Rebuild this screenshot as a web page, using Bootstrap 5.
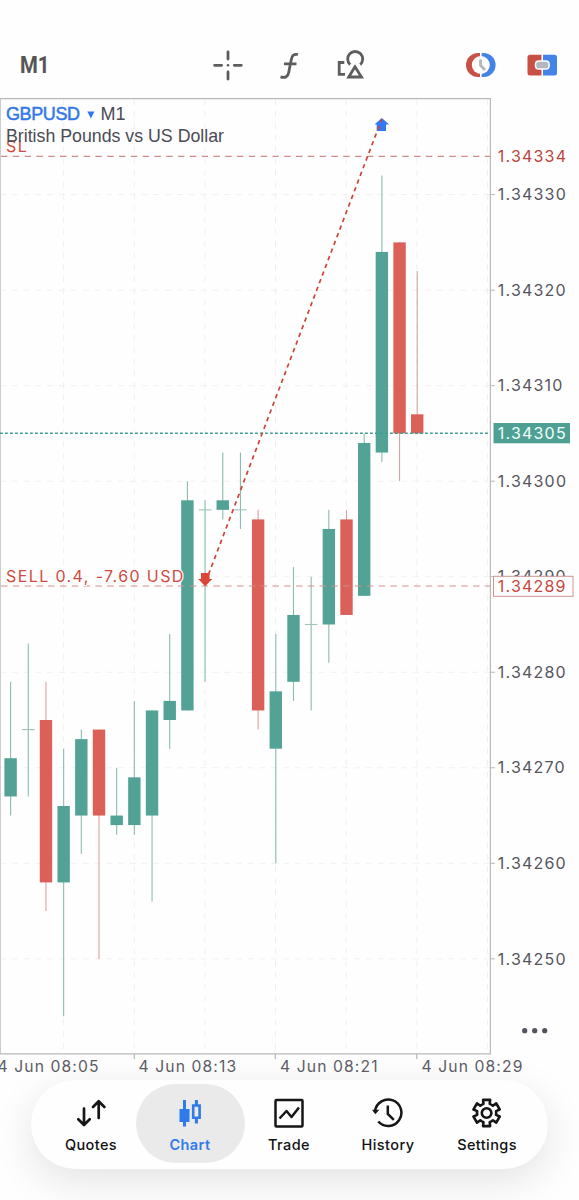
<!DOCTYPE html>
<html lang="en">
<head>
<meta charset="utf-8">
<meta name="viewport" content="width=device-width, initial-scale=1">
<title>GBPUSD M1</title>
<link rel="stylesheet" href="https://cdn.jsdelivr.net/npm/bootstrap@5.3.0/dist/css/bootstrap.min.css">
<style>
  body { background: #fefefe; font-family: Inter, "Liberation Sans", sans-serif; color: #111; height: 1200px; overflow: hidden; }
  .toolbar { height: 98px; padding: 46px 21px 0 20px; }
  .toolbar svg, .chart, .tabs svg { display: block; }
  .tool-mid { gap: 30px; margin-left: 156px; }
  .tool-end { gap: 28px; }
  .chart { width: 579px; height: 982px; overflow: visible; }
  .chart .num { font-size: 16px; letter-spacing: 1.2px; fill: #55555d; }
  .chart .time { font-size: 15.7px; letter-spacing: 1.1px; fill: #5c5c65; }
  .chart .trade { font-size: 16px; letter-spacing: 1.4px; fill: #cf4a3e; }
  .chart .title { font-family: "Liberation Sans", sans-serif; fill: #4b4b55; }
  .grid-line { stroke: #f0f0f0; stroke-width: 1; stroke-dasharray: 6 5.8; }
  .tabs { width: 517px; height: 89px; margin: 0 0 0 31px; border-radius: 45px; background: #fefefe; padding: 4px 4px 4px 5.5px; box-shadow: 0 12px 42px rgba(0,0,0,.11); }
  .tab { width: 109px; height: 79px; border-radius: 40px; padding-top: 13px; font-size: 14.5px; font-weight: 500; letter-spacing: .4px; line-height: 20px; margin-right: -10px; color: #111; text-decoration: none; }
  .tab.active { background: #eaeaea; color: #2f7bea; font-weight: 600; }
  .tab svg { margin-bottom: 5.5px; }
</style>
</head>
<body>
<header class="toolbar d-flex align-items-start">
  <svg width="36" height="38" viewBox="0 0 36 38"><text x="0" y="27.3" font-family="Roboto, sans-serif" font-size="24" font-weight="700" fill="#555" textLength="29.500" lengthAdjust="spacingAndGlyphs">M1</text></svg>
  <div class="tool-mid d-flex">
    <svg width="32" height="38" viewBox="212 46 32 38" fill="none" stroke="#5d5d5d" stroke-width="2.8" stroke-linecap="round"><path d="M228 52v7M228 72v7M214.600 65.300h7M234.300 65.300h7"/><circle cx="228" cy="65.300" r="1.300" fill="#5d5d5d" stroke="none"/></svg>
    <svg width="32" height="38" viewBox="274 46 32 38" fill="none" stroke="#5d5d5d" stroke-width="2.800"><path d="M298 54.500C293.500 53.500 292 56 291.300 59.500L288.700 72.500C288 76.500 285.500 78.300 280.500 76.900M284 63.800h12.500"/></svg>
    <svg width="34" height="38" viewBox="336 46 34 38" fill="none" stroke="#5d5d5d" stroke-width="2.800"><path d="M344.300 62.500H339.200V74.300H345M350.200 64.600A7.500 7.500 0 1 1 360.200 64.600"/><path d="M355 66.800L348.700 77H361.500Z"/></svg>
  </div>
  <div class="tool-end d-flex ms-auto">
    <svg width="34" height="38" viewBox="465 46 34 38"><path d="M481 53h-2A12 12 0 0 0 479 77h2Z" fill="#c95045"/><path d="M482.600 53h2A12 12 0 0 1 484.600 77h-2Z" fill="#4484e8"/><circle cx="481.800" cy="65" r="9" fill="#fefefe"/><path d="M481.600 59.500V65.500L486 70" fill="none" stroke="#b3b7bf" stroke-width="2.900"/></svg>
    <svg width="32" height="38" viewBox="526 46 32 38"><path d="M541.500 54.700H530Q527.500 54.700 527.500 57.200V73Q527.500 75.500 530 75.500H541.500Z" fill="#c95045"/><path d="M543 54.700H554.500Q557 54.700 557 57.200V73Q557 75.500 554.500 75.500H543Z" fill="#4484e8"/><rect x="535.500" y="61.100" width="13.600" height="8" rx="3.300" fill="#b3b7bf" stroke="#fefefe" stroke-width="1.500"/></svg>
  </div>
</header>

<main>
<svg class="chart" viewBox="0 98 579 982">
  <g id="grid"></g>
  <path d="M.5 98V1054" stroke="#ccc"/>
  <path d="M0 98.700H490.400V1053.800H0M134.300 1054v5M275.300 1054v5M416.700 1054v5" fill="none" stroke="#b9b9b9" stroke-width="1.200"/>
  <g id="candles"></g>
  <path d="M1 156.300H490M1 586H490" fill="none" stroke="#cf8d88" stroke-width="1.200" stroke-dasharray="6.500 5.300"/>
  <path d="M0 433.300H490" stroke="#3f9d8f" stroke-width="1.500" stroke-dasharray="2.800 2.200"/>
  <path d="M376.700 131V124.600H374.500L381.800 117.900L389.100 124.600H386V131Z" fill="#3478f0"/>
  <path d="M208.500 574.500L381.800 119" stroke="#cc4439" stroke-width="1.700" stroke-dasharray="4.400 3.800"/>
  <path d="M201 573H209.600V579H212.300L205.200 586.300L198.200 579H201Z" fill="#db4637"/>
  <text class="trade" x="6" y="151.500">SL</text>
  <text class="trade" x="6" y="581.500" stroke="#fff" stroke-width="2" paint-order="stroke">SELL 0.4, -7.60 USD</text>
  <g class="title"><text x="6" y="120" font-size="18" textLength="74" fill="#3277e8" stroke="#3277e8" stroke-width=".5">GBPUSD</text><path d="M87.300 111.500h7.200l-3.600 7z" fill="#3277e8"/><text x="100.500" y="120" font-size="18">M1</text>
  <text x="6" y="141.600" font-size="17.800" textLength="218">British Pounds vs US Dollar</text></g>
  <g id="prices"></g>
  <text class="num" x="497.800" y="162" style="fill:#b9453c">1.34334</text>
  <rect x="493.500" y="423" width="76.500" height="20.300" fill="#4fa094"/><text class="num" x="497.800" y="438.900" style="fill:#f2fffc">1.34305</text>
  <rect x="493.500" y="576.300" width="79.500" height="20" fill="#fff" stroke="#cf9490"/><text class="num" x="497.800" y="592" style="fill:#c8463b">1.34289</text>
  <g class="time"><text x="-2.500" y="1072.300">4 Jun 08:05</text><text x="138.500" y="1072.300">4 Jun 08:13</text><text x="280" y="1072.300">4 Jun 08:21</text><text x="421.500" y="1072.300">4 Jun 08:29</text></g>
  <g fill="#53535e"><circle cx="524.700" cy="1030.700" r="2.600"/><circle cx="534.700" cy="1030.700" r="2.600"/><circle cx="544.700" cy="1030.700" r="2.600"/></g>
</svg>
</main>

<nav class="tabs d-flex">
  <a class="tab d-flex flex-column align-items-center"><svg width="32" height="32" viewBox="75 1097 32 32" fill="none" stroke="#161616" stroke-width="2.700" stroke-linecap="round" stroke-linejoin="round"><path d="M84 1108.500V1124M78.300 1119.300L84 1125L89.700 1119.300M98.700 1118V1102M93 1107L98.700 1101.300L104.400 1107"/></svg>Quotes</a>
  <a class="tab active d-flex flex-column align-items-center"><svg width="32" height="32" viewBox="174 1097 32 32"><path d="M183 1100h3v9h3.500v13H186v4.500h-3V1122h-3.500v-13h3.500z" fill="#2f7bea"/><path d="M196.400 1100v5M196.400 1119v4.500" stroke="#2f7bea" stroke-width="3"/><path d="M193.200 1105.500h6.400v12.300h-6.400z" fill="none" stroke="#2f7bea" stroke-width="2.600"/></svg>Chart</a>
  <a class="tab d-flex flex-column align-items-center"><svg width="32" height="32" viewBox="273 1097 32 32" fill="none" stroke="#161616" stroke-width="2.500" stroke-linejoin="round"><rect x="275.500" y="1100" width="27" height="26.500" rx="1"/><path d="M279.500 1118.500L286.500 1111L291.500 1117L299 1107.500"/></svg>Trade</a>
  <a class="tab d-flex flex-column align-items-center"><svg width="32" height="32" viewBox="372.500 1097 32 32" fill="none" stroke="#161616" stroke-width="2.500"><path d="M375.600 1111A13.200 13.200 0 1 1 378.800 1121.500M388.300 1105.500V1114L394.300 1119.800"/><path d="M372.500 1109.800H379.800L375.800 1114.300Z" fill="#161616" stroke="none"/></svg>History</a>
  <a class="tab d-flex flex-column align-items-center"><svg width="32" height="32" viewBox="-15.600 -16 32 32" fill="none" stroke="#161616" stroke-width="2.600" stroke-linejoin="round"><circle r="4.800"/><path id="gear"/></svg>Settings</a>
</nav>

<script src="https://cdn.jsdelivr.net/npm/bootstrap@5.3.0/dist/js/bootstrap.bundle.min.js"></script>
<script>
  const y = p => 194.6 + (330 - p) * 9.553;
  // up/down/flat, body top, body bottom, high, low (last three digits of the price)
  const bars = [['u',271,267,279,265],['f',274,274,283,267],['d',275,258,279,255],['u',266,258,272,244],
    ['u',273,265,274,261],['d',274,265,274,250],['u',265,264,270,263],['u',269,264,277,263],
    ['u',276,265,276,256],['u',277,275,284,272],['u',298,276,300,276],['f',297,297,298,279],
    ['u',298,297,303,296],['f',297,297,303,295],['d',296,276,297,274],['u',278,272,284,260],
    ['u',286,279,291,277],['f',285,285,290,276],['u',295,285,297,281],['d',296,286,297,286],
    ['u',304,288,305,288],['u',324,303,332,302],['d',325,305,325,300],['d',307,305,322,305]];
  document.getElementById('candles').innerHTML = bars.map(([k,t,b,h,l],i) => {
    const x = 10.6 + i * 17.68, c = k === 'd' ? '#db6158' : '#52a296', w = k === 'd' ? '#dba0a2' : '#8bbcae';
    return `<path d="M${x} ${y(h)}V${y(l)}" stroke="${w}" stroke-width="1.1"/>` + (k === 'f'
      ? `<path d="M${x-6.3} ${y(t)}h12.600" stroke="#9cc4bb" stroke-width="1.1"/>`
      : `<rect x="${x-6.2}" y="${y(t)}" width="12.400" height="${y(b)-y(t)}" fill="${c}"/>`);
  }).join('');
  let g = '', n = '';
  for (let i = 0; i < 7; i++) g += `<path class="grid-line" d="M${63.6+i*70.65} 99V1053"/>`;
  for (let p = 330; p >= 250; p -= 10) {
    g += `<path class="grid-line" d="M0 ${y(p)}H490"/><path d="M490 ${y(p)}h5" stroke="#b9b9b9"/>`;
    n += `<text class="num" x="497.800" y="${y(p)+5.7}">1.34${p}</text>`;
  }
  document.getElementById('grid').innerHTML = g;
  document.getElementById('prices').innerHTML = n;
  // six-toothed gear outline
  let pts = [];
  for (let i = 0; i < 6; i++) [[-30,9.6],[-19,9.6],[-15,13.6],[15,13.6],[19,9.6]].forEach(([a,r]) => {
    const t = (i*60 + a - 90) * Math.PI / 180; pts.push((r*Math.cos(t)).toFixed(2) + ' ' + (r*Math.sin(t)).toFixed(2));
  });
  document.getElementById('gear').setAttribute('d', 'M' + pts.join('L') + 'Z');
</script>
</body>
</html>
